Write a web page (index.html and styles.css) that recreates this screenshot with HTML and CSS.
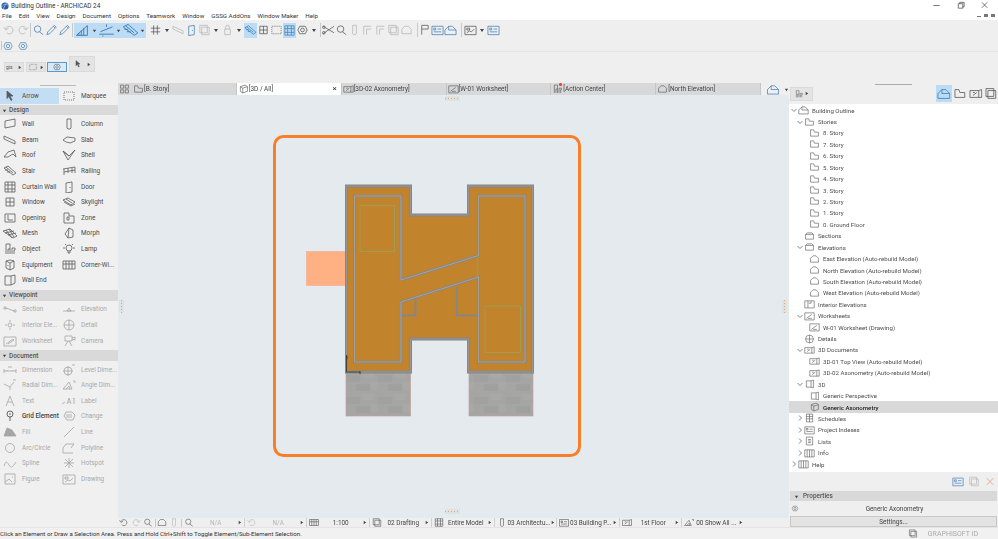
FILE: index.html
```html
<!DOCTYPE html>
<html lang="en">
<head>
<meta charset="utf-8">
<title>Building Outline - ARCHICAD 24</title>
<link rel="stylesheet" href="styles.css">
</head>
<body>
<svg class="defs" aria-hidden="true">
  <symbol id="arrow" viewBox="0 0 14 12"><path d="M4 1l6 5H7l2 4-1 .5-2-4-2 2z" fill="currentColor"/></symbol>
  <symbol id="marquee" viewBox="0 0 14 12"><rect x="2" y="2" width="10" height="8" stroke-dasharray="1 1"/></symbol>
  <symbol id="wall" viewBox="0 0 14 12"><path d="M2 3l10-2v7L2 10z"/></symbol>
  <symbol id="column" viewBox="0 0 14 12"><path d="M5 1h4v9l-1 1H6l-1-1z"/></symbol>
  <symbol id="beam" viewBox="0 0 14 12"><path d="M1 2l11 5v3L1 5z"/></symbol>
  <symbol id="slab" viewBox="0 0 14 12"><path d="M1 6l4-3 8 1 0 3-5 2-4-1z"/></symbol>
  <symbol id="roof" viewBox="0 0 14 12"><path d="M1 8l4-5 6-2 2 7-3-3-5 3z"/></symbol>
  <symbol id="shell" viewBox="0 0 14 12"><path d="M1 2l5 9 7-10-6 6zM1 2l6 5"/></symbol>
  <symbol id="stair" viewBox="0 0 14 12"><path d="M1 3l4-2 8 7-3 2zM3 2l7 6M5 5l-3 0M7 7l-3 0"/></symbol>
  <symbol id="railing" viewBox="0 0 14 12"><path d="M1 4l12-2M2 10V4M6 8V3M10 8V3M13 8V2M2 7l11-2"/></symbol>
  <symbol id="curtain" viewBox="0 0 14 12"><path d="M2 1h10v10H2zM2 4h10M2 8h10M5 1v10M9 1v10"/></symbol>
  <symbol id="door" viewBox="0 0 14 12"><path d="M4 2l6-1v10l-6 1zM8 6v1"/></symbol>
  <symbol id="window" viewBox="0 0 14 12"><path d="M3 2h8v8H3zM3 6h8M7 2v8"/></symbol>
  <symbol id="skylight" viewBox="0 0 14 12"><path d="M1 4l5-2 7 4-4 3zM4 3l6 4M2 6l7 4 4-2"/></symbol>
  <symbol id="opening" viewBox="0 0 14 12"><path d="M2 2h10v8H2zM5 3v5h5"/></symbol>
  <symbol id="zone" viewBox="0 0 14 12"><path d="M2 1h5v3h5v7H2zM5 5h2v3H5z"/></symbol>
  <symbol id="mesh" viewBox="0 0 14 12"><path d="M0 4l7-2 7 7-4 2zM3 3l6 8M6 2l5 8M2 6l9-2M5 8l8-2"/></symbol>
  <symbol id="morph" viewBox="0 0 14 12"><path d="M3 7l4-6 4 2v7l-5 1zM7 1l-1 10"/></symbol>
  <symbol id="object" viewBox="0 0 14 12"><path d="M3 1h4v5H5v5M3 1v10M7 6v5M9 5h3v2h-1v4M9 5v6"/></symbol>
  <symbol id="lamp" viewBox="0 0 14 12"><circle cx="7" cy="5" r="3"/><path d="M6 8v2h2V8M1 5h2M11 5h2M3 1l1 1M11 1l-1 1"/></symbol>
  <symbol id="equip" viewBox="0 0 14 12"><path d="M3 2l4-1 4 1v7l-4 2-4-2zM3 2l4 2 4-2M7 4v7M5 6v1"/></symbol>
  <symbol id="corner" viewBox="0 0 14 12"><path d="M1 2h12v8H1zM1 5h12M4 2v8M7 2v8M10 2v8"/></symbol>
  <symbol id="wallend" viewBox="0 0 14 12"><path d="M2 2h6v9H2zM8 2l4-1v8l-4 2"/></symbol>
  <symbol id="section" viewBox="0 0 14 12"><path d="M1 4h2v2H1zM3 5l8 3M11 7h2v2h-2z"/></symbol>
  <symbol id="elevation" viewBox="0 0 14 12"><path d="M1 8h12M5 8l2-3 2 3z" /></symbol>
  <symbol id="interior" viewBox="0 0 14 12"><circle cx="7" cy="6" r="2"/><path d="M7 1v2M7 9v2M2 6h2M10 6h2"/></symbol>
  <symbol id="detail" viewBox="0 0 14 12"><circle cx="7" cy="6" r="5"/><path d="M2 6h10M7 1v10"/></symbol>
  <symbol id="worksheet" viewBox="0 0 14 12"><path d="M1 2h12v9H1zM3 9l7-5 1 1-6 4"/></symbol>
  <symbol id="camera" viewBox="0 0 14 12"><path d="M3 1h7v5H3zM10 3l3-1v3l-3-1M6 6l-3 5M7 6l3 5" /></symbol>
  <symbol id="dim" viewBox="0 0 14 12"><path d="M1 7h12M1 5v4M13 5v4M4 7v-1M10 7v-1M5 3h4"/></symbol>
  <symbol id="leveldim" viewBox="0 0 14 12"><circle cx="6" cy="7" r="4"/><path d="M6 2v10M1 7h10M10 1h3"/></symbol>
  <symbol id="radial" viewBox="0 0 14 12"><path d="M1 5l6 3 4-5M7 8v3M10 1h3"/></symbol>
  <symbol id="angle" viewBox="0 0 14 12"><path d="M1 10l6-7 3 7zM4 10l3-3 1 3M11 2h2v2"/></symbol>
  <symbol id="text" viewBox="0 0 14 12"><path d="M3 11l4-10 4 10M5 7h4"/></symbol>
  <symbol id="label" viewBox="0 0 14 12"><path d="M0 9l3-2M5 9l2-6 2 6M6 7h2M11 4l1-1v6"/></symbol>
  <symbol id="gridel" viewBox="0 0 14 12"><circle cx="7" cy="4" r="3"/><path d="M7 7v4M7 3v2"/></symbol>
  <symbol id="change" viewBox="0 0 14 12"><path d="M2 6l2-4h6l3 3-2 5H5zM4 5h6M4 7h6"/></symbol>
  <symbol id="fill" viewBox="0 0 14 12"><path d="M1 10l3-8 5 2 4 6z" fill="currentColor"/></symbol>
  <symbol id="line" viewBox="0 0 14 12"><path d="M2 11L12 1"/></symbol>
  <symbol id="arc" viewBox="0 0 14 12"><circle cx="7" cy="6" r="4.500"/></symbol>
  <symbol id="polyline" viewBox="0 0 14 12"><path d="M1 11h10M1 11V6l3-4h8l-3 4"/></symbol>
  <symbol id="spline" viewBox="0 0 14 12"><path d="M1 9c2-6 3-4 5-1s3 3 7-3"/></symbol>
  <symbol id="hotspot" viewBox="0 0 14 12"><path d="M7 1v10M2 6h10M3 2l8 8M11 2l-8 8"/></symbol>
  <symbol id="figure" viewBox="0 0 14 12"><path d="M2 1h10v10H2zM2 9l4-3 3 3M9 4h1"/></symbol>
  <symbol id="drawing" viewBox="0 0 14 12"><path d="M1 2h12v9H1zM3 4h3v2H3zM3 9l3-2 2 1 3-3"/></symbol>
  <symbol id="house" viewBox="0 0 14 12"><path d="M1 11V6l4-4h4l4 4v5zM5 2v4h8"/></symbol>
  <symbol id="folder" viewBox="0 0 14 12"><path d="M2 10V2h4l1 3h5v5z"/></symbol>
  <symbol id="sect" viewBox="0 0 14 12"><path d="M2 10V4l2-2h6l2 2v6zM2 4h10"/></symbol>
  <symbol id="elev" viewBox="0 0 14 12"><path d="M2 10V5l3-3h4l3 3v5z"/></symbol>
  <symbol id="intel" viewBox="0 0 14 12"><path d="M1 2h12v9H1zM5 2v9M9 2v3H6"/></symbol>
  <symbol id="ws" viewBox="0 0 14 12"><path d="M1 2h12v9H1zM3 9l7-5M5 9h5"/></symbol>
  <symbol id="doc3d" viewBox="0 0 14 12"><path d="M1 3h9l3-1v8H1zM10 3v7M4 8l4-3M4 5h2"/></symbol>
  <symbol id="cube" viewBox="0 0 14 12"><path d="M3 3l6-2 3 2v6l-6 2-3-2zM3 3l3 2 6-2M6 5v6"/></symbol>
  <symbol id="persp" viewBox="0 0 14 12"><path d="M3 2h6l3-1v10l-3-1H3zM9 2v8"/></symbol>
  <symbol id="table" viewBox="0 0 14 12"><path d="M3 1h8v10H3zM3 4h8M3 7h8M7 1v10"/></symbol>
  <symbol id="index" viewBox="0 0 14 12"><path d="M1 2h12v9H1zM3 4h2v2H3zM7 5h4M3 8h8"/></symbol>
  <symbol id="list" viewBox="0 0 14 12"><path d="M3 1h8v10H3zM5 4h4M5 6h4M5 8h4"/></symbol>
  <symbol id="book" viewBox="0 0 14 12"><path d="M1 2h12v9H1zM4 2v9M7 2v9M10 2v9"/></symbol>
  <symbol id="undo" viewBox="0 0 14 12"><path d="M3 5a4 4 0 1 1 1 4M1 3l2 3 3-2"/></symbol>
  <symbol id="redo" viewBox="0 0 14 12"><path d="M11 5a4 4 0 1 0-1 4M13 3l-2 3-3-2"/></symbol>
  <symbol id="find" viewBox="0 0 14 12"><circle cx="6" cy="5" r="3.500"/><path d="M8 8l4 3"/></symbol>
  <symbol id="pick" viewBox="0 0 14 12"><path d="M2 11l1-3 6-6 2 2-6 6zM9 2l1-1 2 2-1 1"/></symbol>
  <symbol id="layer" viewBox="0 0 14 12"><path d="M2 10l9-8v8zM4 10V8M6 10V6M8 10V4"/></symbol>
  <symbol id="guide" viewBox="0 0 14 12"><path d="M1 9h12M2 7l10-4M7 1v2M4 10v1"/></symbol>
  <symbol id="grid" viewBox="0 0 14 12"><path d="M2 4h10M2 8h10M5 1v10M9 1v10"/></symbol>
  <symbol id="lock" viewBox="0 0 14 12"><path d="M4 5h6v6H4zM5 5V3a2 2 0 0 1 4 0v2"/></symbol>
  <symbol id="square" viewBox="0 0 14 12"><path d="M2 1h8v8H2zM4 3h8v8H4z"/></symbol>
  <symbol id="gear" viewBox="0 0 14 12"><circle cx="7" cy="6" r="2"/><path d="M2 6l2-4h6l2 4-2 4H4z"/></symbol>
  <symbol id="scissor" viewBox="0 0 14 12"><path d="M1 2l12 7M1 10l12-8"/><circle cx="2" cy="9" r="1.400"/><circle cx="2" cy="3" r="1.400"/></symbol>
  <symbol id="corn" viewBox="0 0 14 12"><path d="M3 11V2h8M6 11V5h5"/></symbol>
  <symbol id="flag" viewBox="0 0 14 12"><path d="M4 11V1h7v4H4"/></symbol>
  <symbol id="cross" viewBox="0 0 14 12"><path d="M3 2l8 8M11 2l-8 8"/></symbol>
  <symbol id="tri" viewBox="0 0 6 6"><path d="M1 2h4L3 5z" fill="currentColor" stroke="none"/></symbol>
  <symbol id="right" viewBox="0 0 6 6"><path d="M2 1v4l3-2z" fill="currentColor" stroke="none"/></symbol>
  <symbol id="chev" viewBox="0 0 8 8"><path d="M1.500 3L4 5.500 6.500 3"/></symbol>
  <symbol id="chevr" viewBox="0 0 8 8"><path d="M3 1.500L5.500 4 3 6.500"/></symbol>
  <symbol id="tilea" viewBox="0 0 14 12"><path d="M2 1h4v4H2zM8 1h4v4H8zM2 7h4v4H2zM8 7h4v4H8z"/></symbol>
</svg>

<header class="title">
  <svg class="logo" viewBox="0 0 10 10"><circle cx="5" cy="5" r="4.500" fill="#2a5ea8"/><path d="M1 6c3-4 5-4 8-2M3 9c1-4 3-6 4-7" stroke="#cfe0f4" fill="none" stroke-width=".8"/></svg>
  <span class="title-text">Building Outline - ARCHICAD 24</span>
  <div class="winctl">
    <svg viewBox="0 0 10 10"><path d="M1 5h7"/></svg>
    <svg viewBox="0 0 10 10"><path d="M2 3h5v5H2zM3.500 3V1.500H8.500V6.500H7"/></svg>
    <svg viewBox="0 0 10 10"><path d="M1.500 1.500l6 6M7.500 1.500l-6 6"/></svg>
  </div>
</header>

<nav class="menu">
  <span>File</span><span>Edit</span><span>View</span><span>Design</span><span>Document</span><span>Options</span><span>Teamwork</span><span>Window</span><span>GSSG AddOns</span><span>Window Maker</span><span>Help</span>
  <div class="docctl"><i class="d1"></i><i class="d2"></i><i class="d3"></i></div>
</nav>

<section class="tb1">
  <svg class="off"><use href="#undo"/></svg><svg class="off"><use href="#redo"/></svg><i class="sep"></i>
  <svg class="blue"><use href="#find"/></svg><svg class="blue"><use href="#pick"/></svg><svg class="blue"><use href="#pick"/></svg><i class="sep"></i>
  <svg class="on e"><use href="#layer"/></svg><svg class="on a"><use href="#tri"/></svg>
  <svg class="on e"><use href="#guide"/></svg><svg class="on a"><use href="#tri"/></svg>
  <svg class="on e"><use href="#stair"/></svg><svg class="on a"><use href="#tri"/></svg>
  <svg class="dk after-group"><use href="#grid"/></svg><svg class="dk a"><use href="#tri"/></svg>
  <svg class="off"><use href="#beam"/></svg><svg class="blue"><use href="#door"/></svg>
  <svg class="off push"><use href="#square"/></svg><svg class="off a"><use href="#tri"/></svg>
  <svg class="off push"><use href="#lock"/></svg><svg class="off a"><use href="#tri"/></svg>
  <svg class="on"><use href="#stair"/></svg><svg class="dk"><use href="#window"/></svg><svg class="dk"><use href="#marquee"/></svg>
  <svg class="on"><use href="#curtain"/></svg><svg class="dk"><use href="#gear"/></svg><svg class="dk a"><use href="#tri"/></svg><i class="sep"></i>
  <svg class="dk"><use href="#scissor"/></svg><svg class="dk"><use href="#find"/></svg><svg class="off"><use href="#column"/></svg><svg class="off"><use href="#corn"/></svg><svg class="off"><use href="#corn"/></svg><svg class="off"><use href="#square"/></svg><svg class="off"><use href="#elev"/></svg><i class="sep wide"></i>
  <svg class="dk"><use href="#flag"/></svg><svg class="blue"><use href="#index"/></svg><svg class="blue"><use href="#house"/></svg><i class="sep wide2"></i>
  <svg class="dk"><use href="#drawing"/></svg><svg class="dk a"><use href="#tri"/></svg><svg class="blue"><use href="#index"/></svg>
</section>

<section class="tb2">
  <i class="sep"></i>
  <svg class="blue"><use href="#gear"/></svg><svg class="blue"><use href="#gear"/></svg>
</section>

<section class="tb3">
  <div class="mini"><span>gis</span><svg class="tr"><use href="#right"/></svg></div>
  <div class="mini"><svg><use href="#marquee"/></svg><svg class="tr"><use href="#right"/></svg></div>
  <div class="mini picked"><svg><use href="#gear"/></svg></div>
  <div class="mini big"><svg><use href="#arrow"/></svg><svg class="tr"><use href="#right"/></svg></div>
</section>

<main class="main">
  <aside class="palette">
    <div class="handle"></div>
    <div class="tools first">
      <div class="tool sel"><svg><use href="#arrow"/></svg><span>Arrow</span></div>
      <div class="tool"><svg><use href="#marquee"/></svg><span>Marquee</span></div>
    </div>
    <h2><svg><use href="#tri"/></svg>Design</h2>
    <div class="tools">
      <div class="tool"><svg><use href="#wall"/></svg><span>Wall</span></div>
      <div class="tool"><svg><use href="#column"/></svg><span>Column</span></div>
      <div class="tool"><svg><use href="#beam"/></svg><span>Beam</span></div>
      <div class="tool"><svg><use href="#slab"/></svg><span>Slab</span></div>
      <div class="tool"><svg><use href="#roof"/></svg><span>Roof</span></div>
      <div class="tool"><svg><use href="#shell"/></svg><span>Shell</span></div>
      <div class="tool"><svg><use href="#stair"/></svg><span>Stair</span></div>
      <div class="tool"><svg class="lt"><use href="#railing"/></svg><span>Railing</span></div>
      <div class="tool"><svg><use href="#curtain"/></svg><span>Curtain Wall</span></div>
      <div class="tool"><svg><use href="#door"/></svg><span>Door</span></div>
      <div class="tool"><svg><use href="#window"/></svg><span>Window</span></div>
      <div class="tool"><svg><use href="#skylight"/></svg><span>Skylight</span></div>
      <div class="tool"><svg><use href="#opening"/></svg><span>Opening</span></div>
      <div class="tool"><svg><use href="#zone"/></svg><span>Zone</span></div>
      <div class="tool"><svg><use href="#mesh"/></svg><span>Mesh</span></div>
      <div class="tool"><svg><use href="#morph"/></svg><span>Morph</span></div>
      <div class="tool"><svg><use href="#object"/></svg><span>Object</span></div>
      <div class="tool"><svg class="lt"><use href="#lamp"/></svg><span>Lamp</span></div>
      <div class="tool"><svg><use href="#equip"/></svg><span>Equipment</span></div>
      <div class="tool"><svg><use href="#corner"/></svg><span>Corner-Wi...</span></div>
      <div class="tool"><svg class="lt"><use href="#wallend"/></svg><span>Wall End</span></div>
    </div>
    <h2><svg><use href="#tri"/></svg>Viewpoint</h2>
    <div class="tools off">
      <div class="tool"><svg><use href="#section"/></svg><span>Section</span></div>
      <div class="tool"><svg><use href="#elevation"/></svg><span>Elevation</span></div>
      <div class="tool"><svg><use href="#interior"/></svg><span>Interior Ele...</span></div>
      <div class="tool"><svg><use href="#detail"/></svg><span>Detail</span></div>
      <div class="tool"><svg><use href="#worksheet"/></svg><span>Worksheet</span></div>
      <div class="tool"><svg><use href="#camera"/></svg><span>Camera</span></div>
    </div>
    <h2><svg><use href="#tri"/></svg>Document</h2>
    <div class="tools off">
      <div class="tool"><svg><use href="#dim"/></svg><span>Dimension</span></div>
      <div class="tool"><svg><use href="#leveldim"/></svg><span>Level Dime...</span></div>
      <div class="tool"><svg><use href="#radial"/></svg><span>Radial Dim...</span></div>
      <div class="tool"><svg><use href="#angle"/></svg><span>Angle Dim...</span></div>
      <div class="tool"><svg><use href="#text"/></svg><span>Text</span></div>
      <div class="tool"><svg><use href="#label"/></svg><span>Label</span></div>
      <div class="tool act"><svg><use href="#gridel"/></svg><span>Grid Element</span></div>
      <div class="tool"><svg><use href="#change"/></svg><span>Change</span></div>
      <div class="tool"><svg><use href="#fill"/></svg><span>Fill</span></div>
      <div class="tool"><svg><use href="#line"/></svg><span>Line</span></div>
      <div class="tool"><svg><use href="#arc"/></svg><span>Arc/Circle</span></div>
      <div class="tool"><svg><use href="#polyline"/></svg><span>Polyline</span></div>
      <div class="tool"><svg><use href="#spline"/></svg><span>Spline</span></div>
      <div class="tool"><svg><use href="#hotspot"/></svg><span>Hotspot</span></div>
      <div class="tool"><svg><use href="#figure"/></svg><span>Figure</span></div>
      <div class="tool"><svg><use href="#drawing"/></svg><span>Drawing</span></div>
    </div>
  </aside>

  <section class="center">
    <div class="tabs">
      <div class="tile"><svg><use href="#tilea"/></svg></div>
      <div class="tab"><svg><use href="#folder"/></svg><span>[B. Story]</span></div>
      <div class="tab active"><svg><use href="#cube"/></svg><span>[3D / All]</span><b class="x">×</b></div>
      <div class="tab"><svg><use href="#doc3d"/></svg><span>[3D-02 Axonometry]</span></div>
      <div class="tab"><svg><use href="#ws"/></svg><span>[W-01 Worksheet]</span></div>
      <div class="tab"><svg><use href="#object"/></svg><span>[Action Center]</span><i class="reddot"></i></div>
      <div class="tab"><svg><use href="#elev"/></svg><span>[North Elevation]</span></div>
      <div class="tabend"><svg class="blue"><use href="#house"/></svg><svg class="tr"><use href="#tri"/></svg></div>
    </div>
    <div class="canvas">
      <svg class="plan" viewBox="118 95 669 423">
        <defs>
          <pattern id="paving" patternUnits="userSpaceOnUse" width="32" height="22" x="346" y="372">
            <rect width="32" height="22" fill="#a5a6a3"/>
            <rect x="0" y="3" width="14" height="7" fill="#a1a29f"/>
            <rect x="16" y="0" width="12" height="6" fill="#a8a9a6"/>
            <rect x="10" y="12" width="14" height="7" fill="#a0a19e"/>
            <rect x="25" y="10" width="7" height="8" fill="#a8a9a6"/>
          </pattern>
        </defs>
        <rect class="out" x="274.500" y="136.500" width="305" height="319" rx="9"/>
        <rect class="salmon" x="306.500" y="251.500" width="40" height="34"/>
        <rect class="pave" x="346" y="372.500" width="64.500" height="43.500"/>
        <rect class="pave" x="469" y="372.500" width="64" height="43.500"/>
        <path class="floor" d="M346.500 186H410.500V215H468.500V186H532.500V372H468.500V339H410.500V372H346.500Z"/>
        <path class="floor-core" d="M346.500 186H410.500V215H468.500V186H532.500V372H468.500V339H410.500V372H346.500Z"/>
        <path class="wall" d="M401 280V196H354.500V362H401V302L478.500 277V362H525V196H478.500V255.500L401 280"/>
        <path class="wall thin" d="M401 315.500H415.500V299M456.700 287V315.500H478.500"/>
        <path class="wall-core" d="M401 280V196H354.500V362H401V302L478.500 277V362H525V196H478.500V255.500L401 280"/>
        <path class="grn" d="M360 205.500H394.500V251.500H360ZM485 306H520.500V352.500H485ZM477.800 257V277"/>
        <path class="axis" d="M346.500 355V372H360"/>
        <text class="axt" x="346" y="359">y</text>
        <text class="axt" x="359" y="374">x</text>
      </svg>
      <i class="grip top"></i>
      <i class="grip bottom"></i>
      <i class="grip side left"></i>
      <i class="grip side right"></i>
    </div>
    <div class="navbar">
      <svg class="dk"><use href="#undo"/></svg><svg class="off"><use href="#redo"/></svg><svg class="dk"><use href="#find"/></svg><i class="sep"></i>
      <svg class="dk"><use href="#elev"/></svg><svg class="off"><use href="#column"/></svg><i class="sep"></i>
      <div class="seg"><svg class="dk"><use href="#find"/></svg><span class="off">N/A</span><svg class="tr"><use href="#right"/></svg></div>
      <div class="seg"><svg class="off"><use href="#undo"/></svg><span class="off">N/A</span><svg class="tr"><use href="#right"/></svg></div>
      <div class="seg"><svg class="dk"><use href="#corner"/></svg><span>1:100</span><svg class="tr"><use href="#right"/></svg></div>
      <div class="seg"><svg class="dk"><use href="#square"/></svg><span>02 Drafting</span><svg class="tr"><use href="#right"/></svg></div>
      <div class="seg"><svg class="dk"><use href="#curtain"/></svg><span>Entire Model</span><svg class="tr"><use href="#right"/></svg></div>
      <div class="seg"><svg class="dk"><use href="#column"/></svg><span>03 Architectu...</span><svg class="tr"><use href="#right"/></svg></div>
      <div class="seg"><svg class="dk"><use href="#index"/></svg><span>03 Building P...</span><svg class="tr"><use href="#right"/></svg></div>
      <div class="seg"><svg class="dk"><use href="#doc3d"/></svg><span>1st Floor</span><svg class="tr"><use href="#right"/></svg></div>
      <div class="seg last"><svg class="dk"><use href="#angle"/></svg><span>00 Show All ...</span><svg class="tr"><use href="#right"/></svg></div>
    </div>
  </section>

  <aside class="nav">
    <div class="handle2"></div>
    <div class="navtop">
      <div class="mini navbtn"><svg><use href="#object"/></svg><svg class="tr"><use href="#right"/></svg></div>
      <div class="maps">
        <svg class="chosen"><use href="#house"/></svg><svg><use href="#folder"/></svg><svg><use href="#doc3d"/></svg><svg><use href="#square"/></svg>
      </div>
    </div>
    <ul class="tree">
      <li class="l0"><svg class="car"><use href="#chev"/></svg><svg><use href="#house"/></svg><span>Building Outline</span></li>
      <li class="l1"><svg class="car"><use href="#chev"/></svg><svg><use href="#folder"/></svg><span>Stories</span></li>
      <li class="l2"><i></i><svg><use href="#folder"/></svg><span>8. Story</span></li>
      <li class="l2"><i></i><svg><use href="#folder"/></svg><span>7. Story</span></li>
      <li class="l2"><i></i><svg><use href="#folder"/></svg><span>6. Story</span></li>
      <li class="l2"><i></i><svg><use href="#folder"/></svg><span>5. Story</span></li>
      <li class="l2"><i></i><svg><use href="#folder"/></svg><span>4. Story</span></li>
      <li class="l2"><i></i><svg><use href="#folder"/></svg><span>3. Story</span></li>
      <li class="l2"><i></i><svg><use href="#folder"/></svg><span>2. Story</span></li>
      <li class="l2"><i></i><svg><use href="#folder"/></svg><span>1. Story</span></li>
      <li class="l2"><i></i><svg><use href="#folder"/></svg><span>0. Ground Floor</span></li>
      <li class="l1"><i></i><svg><use href="#sect"/></svg><span>Sections</span></li>
      <li class="l1"><svg class="car"><use href="#chev"/></svg><svg><use href="#sect"/></svg><span>Elevations</span></li>
      <li class="l2"><i></i><svg><use href="#elev"/></svg><span>East Elevation (Auto-rebuild Model)</span></li>
      <li class="l2"><i></i><svg><use href="#elev"/></svg><span>North Elevation (Auto-rebuild Model)</span></li>
      <li class="l2"><i></i><svg><use href="#elev"/></svg><span>South Elevation (Auto-rebuild Model)</span></li>
      <li class="l2"><i></i><svg><use href="#elev"/></svg><span>West Elevation (Auto-rebuild Model)</span></li>
      <li class="l1"><i></i><svg><use href="#intel"/></svg><span>Interior Elevations</span></li>
      <li class="l1"><svg class="car"><use href="#chev"/></svg><svg><use href="#ws"/></svg><span>Worksheets</span></li>
      <li class="l2"><i></i><svg><use href="#ws"/></svg><span>W-01 Worksheet (Drawing)</span></li>
      <li class="l1"><i></i><svg><use href="#detail"/></svg><span>Details</span></li>
      <li class="l1"><svg class="car"><use href="#chev"/></svg><svg><use href="#doc3d"/></svg><span>3D Documents</span></li>
      <li class="l2"><i></i><svg><use href="#doc3d"/></svg><span>3D-01 Top View (Auto-rebuild Model)</span></li>
      <li class="l2"><i></i><svg><use href="#doc3d"/></svg><span>3D-02 Axonometry (Auto-rebuild Model)</span></li>
      <li class="l1"><svg class="car"><use href="#chev"/></svg><svg><use href="#persp"/></svg><span>3D</span></li>
      <li class="l2"><i></i><svg><use href="#persp"/></svg><span>Generic Perspective</span></li>
      <li class="l2 cur"><i></i><svg><use href="#cube"/></svg><span>Generic Axonometry</span></li>
      <li class="l1"><svg class="car"><use href="#chevr"/></svg><svg><use href="#table"/></svg><span>Schedules</span></li>
      <li class="l1"><svg class="car"><use href="#chevr"/></svg><svg><use href="#index"/></svg><span>Project Indexes</span></li>
      <li class="l1"><svg class="car"><use href="#chevr"/></svg><svg><use href="#list"/></svg><span>Lists</span></li>
      <li class="l1"><svg class="car"><use href="#chevr"/></svg><svg><use href="#book"/></svg><span>Info</span></li>
      <li class="l0"><svg class="car"><use href="#chevr"/></svg><svg><use href="#book"/></svg><span>Help</span></li>
    </ul>
    <div class="navfoot">
      <svg class="blue"><use href="#index"/></svg><svg class="off"><use href="#square"/></svg><svg class="red"><use href="#cross"/></svg>
    </div>
    <h2 class="prop"><svg><use href="#tri"/></svg>Properties</h2>
    <div class="propname"><svg><use href="#gear"/></svg><span>Generic Axonometry</span></div>
    <button class="settings">Settings...</button>
  </aside>
</main>

<footer class="status">
  <span class="hint">Click an Element or Draw a Selection Area. Press and Hold Ctrl+Shift to Toggle Element/Sub-Element Selection.</span>
  <svg class="dk"><use href="#square"/></svg>
  <span class="gs">GRAPHISOFT ID</span>
</footer>
</body>
</html>
```
FILE: styles.css
```css
* { box-sizing: border-box; }
html, body { margin: 0; padding: 0; }
body {
  width: 998px; height: 539px; overflow: hidden; background: #efefef;
  font-family: Roboto, "Open Sans", sans-serif; font-size: 6.400px; color: #4a4a4a;
  display: flex; flex-direction: column;
  filter: blur(.3px);
}
.defs { display: none; }
svg { fill: none; stroke: currentColor; stroke-width: .8; display: block; flex: none; overflow: visible; }
i { display: block; font-style: normal; }

.title { height: 11px; background: #fff; display: flex; align-items: center; padding-left: 1px; color: #333; flex: none; }
.logo { width: 8px; height: 8px; stroke: none; }
.title-text { margin-left: 2px; }
.winctl { margin-left: auto; display: flex; gap: 14px; padding-right: 8px; color: #444; }
.winctl svg { width: 10px; height: 9px; }

.menu { height: 9px; background: #fff; display: flex; align-items: center; padding-left: 2px; gap: 7px; color: #333; flex: none; font-size: 6.200px; }
.docctl { margin-left: auto; display: flex; gap: 3px; padding-right: 3px; align-items: center; }
.docctl i { width: 4px; height: 3px; background: #777; }
.docctl .d1 { height: 1px; margin-top: 2px; }

.off { color: #b5b5b5; }
.blue { color: #3e7cb8; }
.dk { color: #555; }
.on { color: #3f7fb8; background: #bcdcf5; }
.red { color: #ea8a78; }
.lt { color: #999; }
.sep { width: 1px; height: 14px; background: #c8c8c8; align-self: center; }

.tb1 { height: 20px; flex: none; display: flex; align-items: center; padding-left: 3px; }
.tb1 svg { width: 13px; height: 12px; }
.tb1 svg.on { height: 15px; }
.tb1 svg.e { width: 17px; }
.tb1 svg.a { width: 10px; height: 6px; color: #444; }
.tb1 svg.on.a { height: 15px; padding: 4.500px 1px; width: 7px; color: #444; }
.tb1 svg.after-group { margin-left: 3px; }
.tb1 .sep { margin: 0 1px; }
.tb1 .sep.wide { margin: 0 0 0 4px; }
.tb1 .sep.wide2 { margin: 0 2px 0 4px; }
.tb2 { height: 12px; flex: none; display: flex; align-items: center; padding-left: 1px; gap: 3px; border-bottom: 1px solid #e4e4e4; }
.tb2 svg { width: 12px; height: 10px; }
.tb2 .sep { height: 9px; margin-right: -3px; }
.tb3 { height: 31px; flex: none; display: flex; align-items: flex-end; padding: 0 0 11px 4px; gap: 1.500px; }

.mini { height: 10px; width: 20px; background: #e4e4e4; border: 1px solid #dadada; display: flex; align-items: center; justify-content: space-between; padding: 0 1px; font-size: 5px; color: #555; }
.mini svg { width: 10px; height: 8px; }
.mini svg.tr, .tr { width: 5px; height: 5px; color: #444; }
.mini.picked { border: 1px solid #5d97cb; background: #d8e9f7; justify-content: center; }
.mini.big { height: 16px; width: 26px; padding: 0 3px; }
.main { height: 444px; flex: none; display: grid; grid-template-columns: 118px 671px 209px; }

.palette { background: #f0f0f0; position: relative; padding-top: 4px; }
.handle { position: absolute; left: 40px; top: 2px; width: 36px; height: 1px; background: #bbb; }
.palette h2 { margin: 0; height: 10.500px; background: #d9d9d9; font-size: 6.400px; font-weight: 500; color: #555; display: flex; align-items: center; padding-left: 2px; gap: 2px; }
.palette h2 svg { width: 5px; height: 5px; color: #444; }
.tools { display: grid; grid-template-columns: 59px 59px; grid-auto-rows: 15.600px; padding: 1px 0 2px; }
.tools.first { padding: 1px 0 1.400px; }
.tool { display: flex; align-items: center; padding-left: 3px; gap: 5px; white-space: nowrap; }
.tool svg { width: 14px; height: 12px; color: #5a5a5a; }
.tool.sel { background: #c3def4; }
.tools.off .tool { color: #a9a9a9; }
.tools.off .tool svg { color: #a5a5a5; }
.tools.off .tool.act, .tools.off .tool.act svg { color: #444; }
.tools.off .tool.act { font-weight: 500; }

.center { display: flex; flex-direction: column; min-width: 0; }
.tabs { height: 12px; flex: none; display: flex; background: #d8d8d8; }
.tile { width: 14px; display: flex; align-items: center; justify-content: center; }
.tile svg { width: 11px; height: 10px; color: #555; }
.tab { width: 105px; display: flex; align-items: center; padding-left: 1px; border-right: 1px solid #c6c6c6; position: relative; color: #444; }
.tab svg { width: 11px; height: 10px; color: #555; }
.tab.active { background: #fff; }
.tab .x { position: absolute; right: 4px; font-size: 8px; font-weight: 400; line-height: 1; color: #333; }
.reddot { position: absolute; left: 8px; top: 0; width: 2.500px; height: 2.500px; border-radius: 50%; background: #e8472b; }
.tabend { flex: 1; display: flex; align-items: center; padding-left: 5px; gap: 4px; background: #efefef; }
.tabend svg.blue { width: 14px; height: 11px; }

.canvas { height: 423px; flex: none; background: #e4eaed; position: relative; }
.plan { display: block; width: 669px; height: 423px; stroke: none; }
.out { fill: none; stroke: #f77f27; stroke-width: 3; }
.salmon { fill: #ffb183; stroke: #f2b19a; stroke-width: .7; }
.pave { fill: url(#paving); stroke: #c2a0a0; stroke-width: .7; }
.floor { fill: #c1842d; stroke: #868686; stroke-width: 3; }
.floor-core { fill: none; stroke: #9c9c9c; stroke-width: .8; }
.wall { fill: none; stroke: #868686; stroke-width: 2.700; }
.wall.thin { stroke-width: 2; }
.wall-core { fill: none; stroke: #a8a8a8; stroke-width: .8; }
.grn { fill: none; stroke: #9aa15c; stroke-width: .8; }
.axis { fill: none; stroke: #222; stroke-width: .7; }
.axt { font-size: 4.500px; fill: #333; }

.grip { position: absolute; background: #dde2e3; }
.grip::after { content: ""; display: block; width: 100%; height: 100%; background: repeating-linear-gradient(90deg, #e8a66e 0 1.500px, transparent 1.500px 3px) center / 100% 1px no-repeat; }
.grip.top { left: 327px; top: 1px; width: 15px; height: 5px; }
.grip.bottom { left: 327px; bottom: 4px; width: 15px; height: 5px; }
.grip.side { width: 5px; height: 13px; top: 205px; }
.grip.side::after { background: repeating-linear-gradient(0deg, #e8a66e 0 1.500px, transparent 1.500px 3px) center / 1px 100% no-repeat; }
.grip.left { left: 1px; }
.grip.right { right: 2px; }

.navbar { height: 9px; flex: none; display: flex; align-items: center; background: #efefef; color: #444; }
.navbar svg { width: 12px; height: 9px; }
.navbar .sep { height: 8px; margin: 0 .5px; }
.seg { width: 62.500px; display: flex; align-items: center; border-right: 1px solid #d0d0d0; padding: 0 2px 0 1px; white-space: nowrap; }
.seg.last { border: 0; }
.seg span { flex: 1; text-align: center; }
.seg svg.tr { width: 5px; height: 5px; }

.nav { background: #efefef; position: relative; display: flex; flex-direction: column; }
.handle2 { position: absolute; left: 86px; top: 1px; width: 37px; height: 1px; background: #aaa; }
.navtop { height: 21px; flex: none; display: flex; align-items: center; justify-content: space-between; padding-left: 1px; }
.navbtn { width: 23px; height: 14px; padding: 0 3px; }
.maps { display: flex; gap: 2px; }
.maps svg { width: 13.700px; height: 15px; padding: 1px 0; color: #555; }
.maps .chosen { background: #bcdcf5; color: #3a78b0; outline: 1px solid #bcdcf5; }
.tree { list-style: none; margin: 0; padding: .4px 0 0; height: 368px; background: #fff; flex: none; font-size: 6.100px; }
.tree li { height: 11.430px; display: flex; align-items: center; color: #4d4d4d; white-space: nowrap; }
.tree svg { width: 11px; height: 10px; color: #5c5c5c; }
.tree svg.car, .tree li > i { width: 8px; height: 8px; color: #666; flex: none; }
.tree span { margin-left: 3px; }
.l0 { padding-left: 1px; }
.l1 { padding-left: 7px; }
.l2 { padding-left: 12px; }
.tree .cur { background: #d9d9d9; color: #222; font-weight: 500; }
.navfoot { height: 19px; flex: none; display: flex; justify-content: flex-end; align-items: center; gap: 4px; padding-right: 2px; }
.navfoot svg { width: 12px; height: 11px; }
.prop { margin: 0 1px; height: 10px; flex: none; background: #d8d8d8; font-size: 6.400px; font-weight: 500; color: #555; display: flex; align-items: center; gap: 4px; padding-left: 4px; }
.prop svg { width: 5px; height: 5px; color: #444; }
.propname { height: 15px; flex: none; display: flex; align-items: center; padding-left: 2px; color: #444; }
.propname svg { width: 8px; height: 7px; color: #555; }
.propname span { flex: 1; text-align: center; padding-right: 8px; }
.settings { margin: 0 1px; height: 11px; flex: none; padding: 0; border: 1px solid #c8c8c8; background: #e3e3e3; font: inherit; color: #444; }

.status { height: 12px; flex: none; display: flex; align-items: center; background: #f1f1f1; border-top: 1px solid #e4e4e4; color: #333; padding-right: 20px; }
.hint { flex: 1; font-size: 6.150px; }
.status svg { width: 10px; height: 9px; margin-right: 10px; }
.gs { color: #aaa; font-size: 7px; }
```
